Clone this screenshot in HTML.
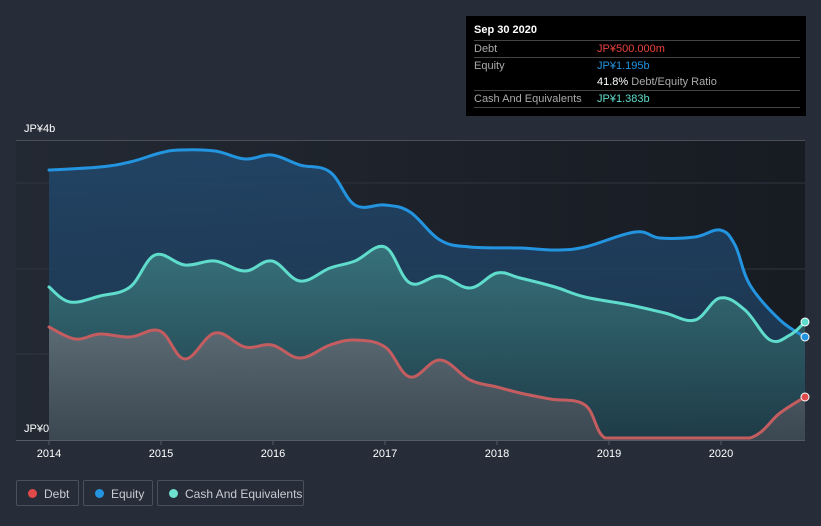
<!DOCTYPE html>
<html><head><style>
body{margin:0;background:#262d38;width:821px;height:526px;overflow:hidden;font-family:"Liberation Sans",sans-serif;position:relative}
.tt{position:absolute;left:466px;top:16px;width:340px;height:100px;background:#000;color:#fff;font-size:11px}
.tt .r{position:absolute;left:8px;width:326px;border-top:1px solid #444;height:16px}
.tt span{position:absolute;top:2px}
.lg{position:absolute;top:480px;height:26px;border:1px solid #4a515c;border-radius:2px;color:#c8ccd2;font-size:12px;line-height:26px;box-sizing:border-box}
.lg i{position:absolute;left:11px;top:8px;width:9px;height:9px;border-radius:50%}
.lg b{font-weight:normal;position:absolute;left:27px}
</style></head><body>
<svg width="821" height="526" style="position:absolute;left:0;top:0">
<defs>
<linearGradient id="bg" x1="0" x2="1"><stop offset="0" stop-color="#232933"/><stop offset="1" stop-color="#171b22"/></linearGradient>
<linearGradient id="eq" x1="0" y1="0" x2="0" y2="1"><stop offset="0" stop-color="#22486c" stop-opacity=".85"/><stop offset="1" stop-color="#1a3550" stop-opacity=".85"/></linearGradient>
<linearGradient id="ca" x1="0" y1="0" x2="0" y2="1"><stop offset="0" stop-color="#3b7a80" stop-opacity=".85"/><stop offset="1" stop-color="#1f3d47" stop-opacity=".85"/></linearGradient>
<linearGradient id="de" x1="0" y1="0" x2="0" y2="1"><stop offset="0" stop-color="#6a6f78" stop-opacity=".75"/><stop offset="1" stop-color="#454b54" stop-opacity=".75"/></linearGradient>
</defs>
<rect x="16" y="141" width="789" height="299" fill="url(#bg)"/>
<line x1="16" y1="140.5" x2="805" y2="140.5" stroke="#4a5058"/>
<line x1="16" y1="183" x2="805" y2="183" stroke="#2f3640"/>
<line x1="16" y1="269" x2="805" y2="269" stroke="#2f3640"/>
<line x1="16" y1="354" x2="805" y2="354" stroke="#2f3640"/>
<path id="fe" fill="url(#eq)"/>
<path id="fc" fill="url(#ca)"/>
<path id="fd" fill="url(#de)"/>
<g fill="none" stroke-width="3" stroke-linejoin="round" stroke-linecap="round">
<path id="le" stroke="#2394df"/>
<path id="lc" stroke="#5fdccb"/>
<path id="ld" stroke="#c45d60"/>
</g>
<circle cx="805" cy="322" r="4" fill="#5fdccb" stroke="#fff"/>
<circle cx="805" cy="337" r="4" fill="#2394df" stroke="#fff"/>
<circle cx="805" cy="397" r="4" fill="#e04a4a" stroke="#fff"/>
<line x1="16" y1="440.5" x2="805" y2="440.5" stroke="#555c66"/>
<g stroke="#555c66"><line x1="49" y1="440" x2="49" y2="445"/><line x1="161" y1="440" x2="161" y2="445"/><line x1="273" y1="440" x2="273" y2="445"/><line x1="385" y1="440" x2="385" y2="445"/><line x1="497" y1="440" x2="497" y2="445"/><line x1="609" y1="440" x2="609" y2="445"/><line x1="721" y1="440" x2="721" y2="445"/></g>
<g fill="#fff" font-size="11" text-anchor="middle"><text x="49" y="457">2014</text><text x="161" y="457">2015</text><text x="273" y="457">2016</text><text x="385" y="457">2017</text><text x="497" y="457">2018</text><text x="609" y="457">2019</text><text x="721" y="457">2020</text></g>
<text x="24" y="132" fill="#fff" font-size="11">JP¥4b</text>
<text x="24" y="432" fill="#fff" font-size="11">JP¥0</text>
</svg>
<div class="tt">
<div style="position:absolute;left:8px;top:8px;font-weight:bold">Sep 30 2020</div>
<div class="r" style="top:24px"><span style="color:#aaa">Debt</span><span style="left:123px;color:#e8423f">JP¥500.000m</span></div>
<div class="r" style="top:41px"><span style="color:#aaa">Equity</span><span style="left:123px;color:#2394df">JP¥1.195b</span><span style="left:123px;top:18px"><span style="position:static;color:#fff">41.8%</span> <span style="position:static;color:#aaa">Debt/Equity Ratio</span></span></div>
<div class="r" style="top:74px"><span style="color:#aaa">Cash And Equivalents</span><span style="left:123px;color:#5fdccb">JP¥1.383b</span></div>
<div class="r" style="top:91px;height:0"></div>
</div>
<div class="lg" style="left:16px;width:63px"><i style="background:#e04a4a"></i><b>Debt</b></div>
<div class="lg" style="left:83px;width:70px"><i style="background:#2394df"></i><b>Equity</b></div>
<div class="lg" style="left:157px;width:147px"><i style="background:#6ee0cf"></i><b>Cash And Equivalents</b></div>
<script>
function cl(v){return Math.min(v,438).toFixed(1);}
function sm(p){var d="M"+p[0][0]+","+p[0][1];for(var i=0;i<p.length-1;i++){var a=p[i-1]||p[i],b=p[i],c=p[i+1],e=p[i+2]||c;var t=0.18;d+=" C"+(b[0]+(c[0]-a[0])*t).toFixed(1)+","+cl(b[1]+(c[1]-a[1])*t)+" "+(c[0]-(e[0]-b[0])*t).toFixed(1)+","+cl(c[1]-(e[1]-b[1])*t)+" "+c[0]+","+c[1];}return d;}
var E=[[49,170],[100,167],[130,162],[160,153],[180,150],[215,151],[245,159],[272,155],[300,165],[330,172],[355,205],[385,205],[410,212],[440,240],[470,247],[520,248],[555,250],[585,247],[635,232],[660,238],[695,237],[720,230],[735,245],[750,285],[780,320],[805,337]];
var C=[[49,287],[70,302],[100,296],[130,287],[155,255],[185,265],[215,261],[245,271],[272,261],[300,281],[330,268],[355,261],[385,247],[410,283],[440,276],[470,288],[497,273],[520,278],[555,287],[585,297],[630,305],[665,313],[695,320],[720,298],[745,310],[770,340],[790,335],[805,322]];
var D=[[49,327],[75,339],[100,334],[130,337],[160,331],[185,359],[215,333],[245,347],[272,345],[300,358],[330,345],[355,340],[385,347],[410,377],[440,360],[470,380],[497,387],[520,393],[550,399],[585,405],[605,438],[640,438],[700,438],[750,438],[780,413],[805,397]];
[[E,"le","fe"],[C,"lc","fc"],[D,"ld","fd"]].forEach(function(s){var d=sm(s[0]);document.getElementById(s[1]).setAttribute("d",d);document.getElementById(s[2]).setAttribute("d",d+" L805,440 L49,440Z");});
</script>
</body></html>
